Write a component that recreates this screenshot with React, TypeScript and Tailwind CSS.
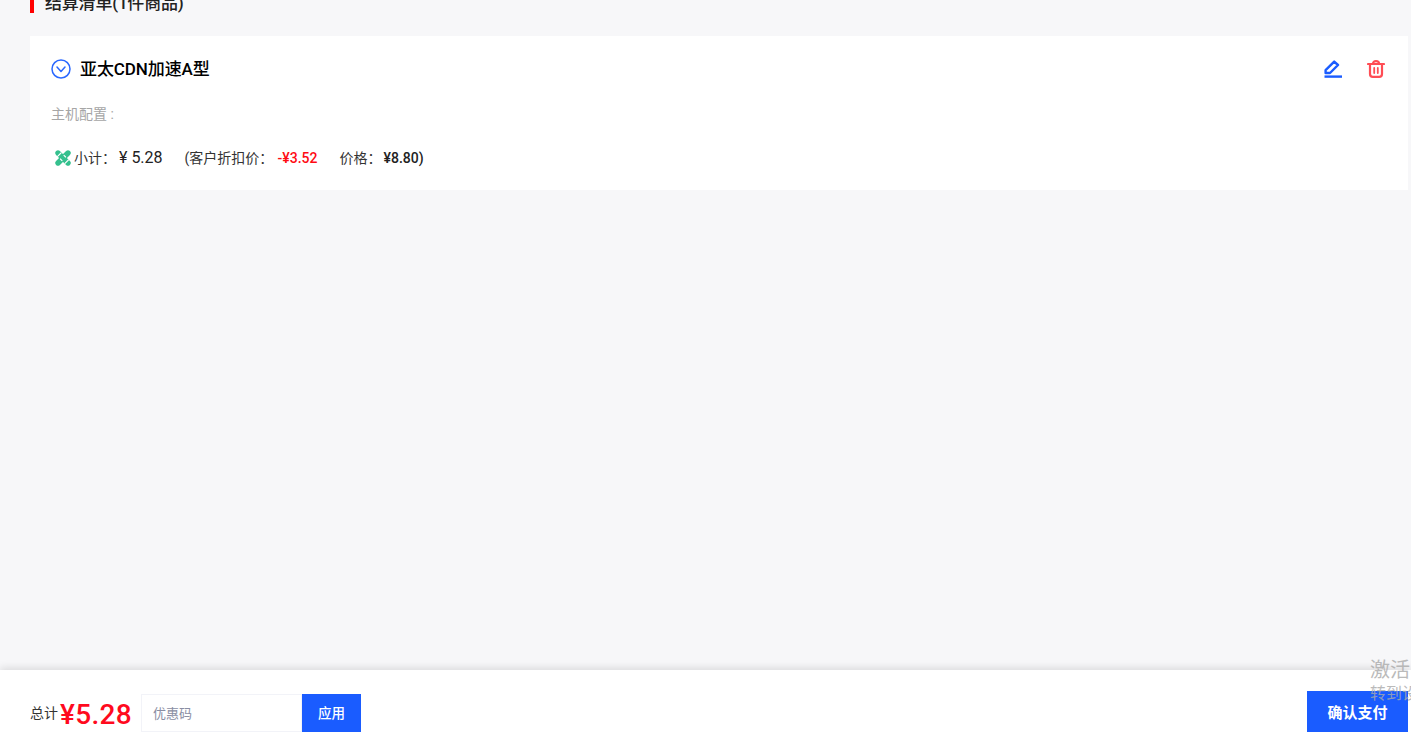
const FONT = "font-['Roboto','Noto_Sans_CJK_SC',sans-serif]";

function CircleChevron() {
  return (
    <svg width="20" height="20" viewBox="0 0 20 20" fill="none" stroke="#2a68ff" strokeWidth="1.5" strokeLinecap="round" strokeLinejoin="round">
      <circle cx="10" cy="10" r="9" />
      <path d="M6 8l4 4.5L14 8" />
    </svg>
  );
}

function EditIcon() {
  return (
    <svg width="18" height="18" viewBox="0 0 18 18" fill="none" stroke="#1a5cff" strokeWidth="2.4" strokeLinejoin="round">
      <path d="M1.6 10.2L10.2 1.6l3.8 3.4-8 8H1.6z" />
      <path d="M0.5 16.6h17.5" />
    </svg>
  );
}

function TrashIcon() {
  return (
    <svg width="18" height="18" viewBox="0 0 18 18" fill="none" stroke="#ff4d55" strokeWidth="2.2" strokeLinecap="round" strokeLinejoin="round">
      <path d="M1 4h16" />
      <path d="M6 3.6C6 2 7 1.2 9 1.2s3 .8 3 2.4" />
      <path d="M3 4.4v9.6c0 1.6 1 2.8 2.8 2.8h6.4c1.8 0 2.8-1.2 2.8-2.8V4.4" />
      <path d="M7.2 8v5M10.8 8v5" strokeWidth="1.8" />
    </svg>
  );
}

function BadgeIcon() {
  return (
    <svg width="18" height="18" viewBox="0 0 18 18" fill="none" strokeLinecap="round">
      <path d="M4 4l10 10" stroke="#35c08e" strokeWidth="5.4" />
      <path d="M14 4L4 14" stroke="#35c08e" strokeWidth="5.4" />
      <path d="M3.6 7.4l3.4-3.4M11 14.4l3.4-3.4M10 6.4l1.6 1.6M6.4 10L8 11.6" stroke="#ffffff" strokeWidth="1.1" />
    </svg>
  );
}

export default function App() {
  return (
    <div className={`relative h-[738px] overflow-hidden bg-[#f7f7f9] ${FONT}`}>
      <div className="flex flex-col pl-[30px] pr-[3px]">
        <div className="-mt-[8px] flex h-[21px] items-center border-l-4 border-[#ff0000] pl-[11px]">
          <h2 className="text-[17px] font-medium leading-5 tracking-[-0.2px] text-[#222222]">结算清单(1件商品)</h2>
        </div>

        <div className="mt-[23px] flex h-[154px] flex-col bg-white pl-[21px] pr-[23px]">
          <div className="mt-[23px] flex h-5 items-center justify-between">
            <div className="flex items-center gap-[9px]">
              <CircleChevron />
              <span className="text-[17px] font-medium leading-5 tracking-[-0.1px] text-black">亚太CDN加速A型</span>
            </div>
            <div className="flex items-center gap-[25px]">
              <EditIcon />
              <TrashIcon />
            </div>
          </div>

          <div className="mt-[25px] text-sm leading-5 text-[#a6a6a6]">主机配置 :</div>

          <div className="mt-[24px] flex h-5 items-center pl-[3px] text-sm leading-5 text-[#333333]">
            <BadgeIcon />
            <span className="ml-[2px] w-[45px]">小计：</span>
            <span className="text-base text-[#222222]">¥ 5.28</span>
            <span className="ml-[22px] w-[93px] whitespace-nowrap">(客户折扣价：</span>
            <span className="w-[41px] font-medium text-[#ff0a14]">-¥3.52</span>
            <span className="ml-[21px] w-[44px]">价格：</span>
            <span className="font-medium text-[#222222]">¥8.80)</span>
          </div>
        </div>
      </div>

      <div className="absolute bottom-0 left-0 right-0 flex h-[68px] items-start justify-between bg-white pl-[30px] pr-[3px] shadow-[0_-2px_8px_rgba(0,0,0,0.12)]">
        <div className="mt-6 flex items-center">
          <span className="w-[30px] text-sm leading-5 text-[#333333]">总计</span>
          <span className="h-[38px] w-[71px] whitespace-nowrap text-[28px] font-medium leading-[42px] tracking-[0.3px] text-[#ff0a1e]">¥5.28</span>
          <div className="ml-[10px] flex h-[38px]">
            <input
              placeholder="优惠码"
              className="h-full w-[161px] border border-[#f2f3f8] bg-white pl-[11px] text-[13px] text-[#333333] outline-none placeholder:text-[#8a8ea3]"
            />
            <button className="h-full w-[59px] bg-[#1a5cff] text-[13.5px] font-medium text-white">应用</button>
          </div>
        </div>
        <button className="mt-[21px] h-[41px] w-[101px] bg-[#1a5cff] pt-[3px] text-[15px] font-bold text-white">确认支付</button>
      </div>

      <div className="pointer-events-none absolute left-[1370px] top-[657px] flex flex-col text-[#aaaaaa] opacity-80">
        <span className="text-xl leading-[26px] whitespace-nowrap">激活</span>
        <span className="text-base leading-[22px] whitespace-nowrap">转到设置</span>
      </div>
    </div>
  );
}
